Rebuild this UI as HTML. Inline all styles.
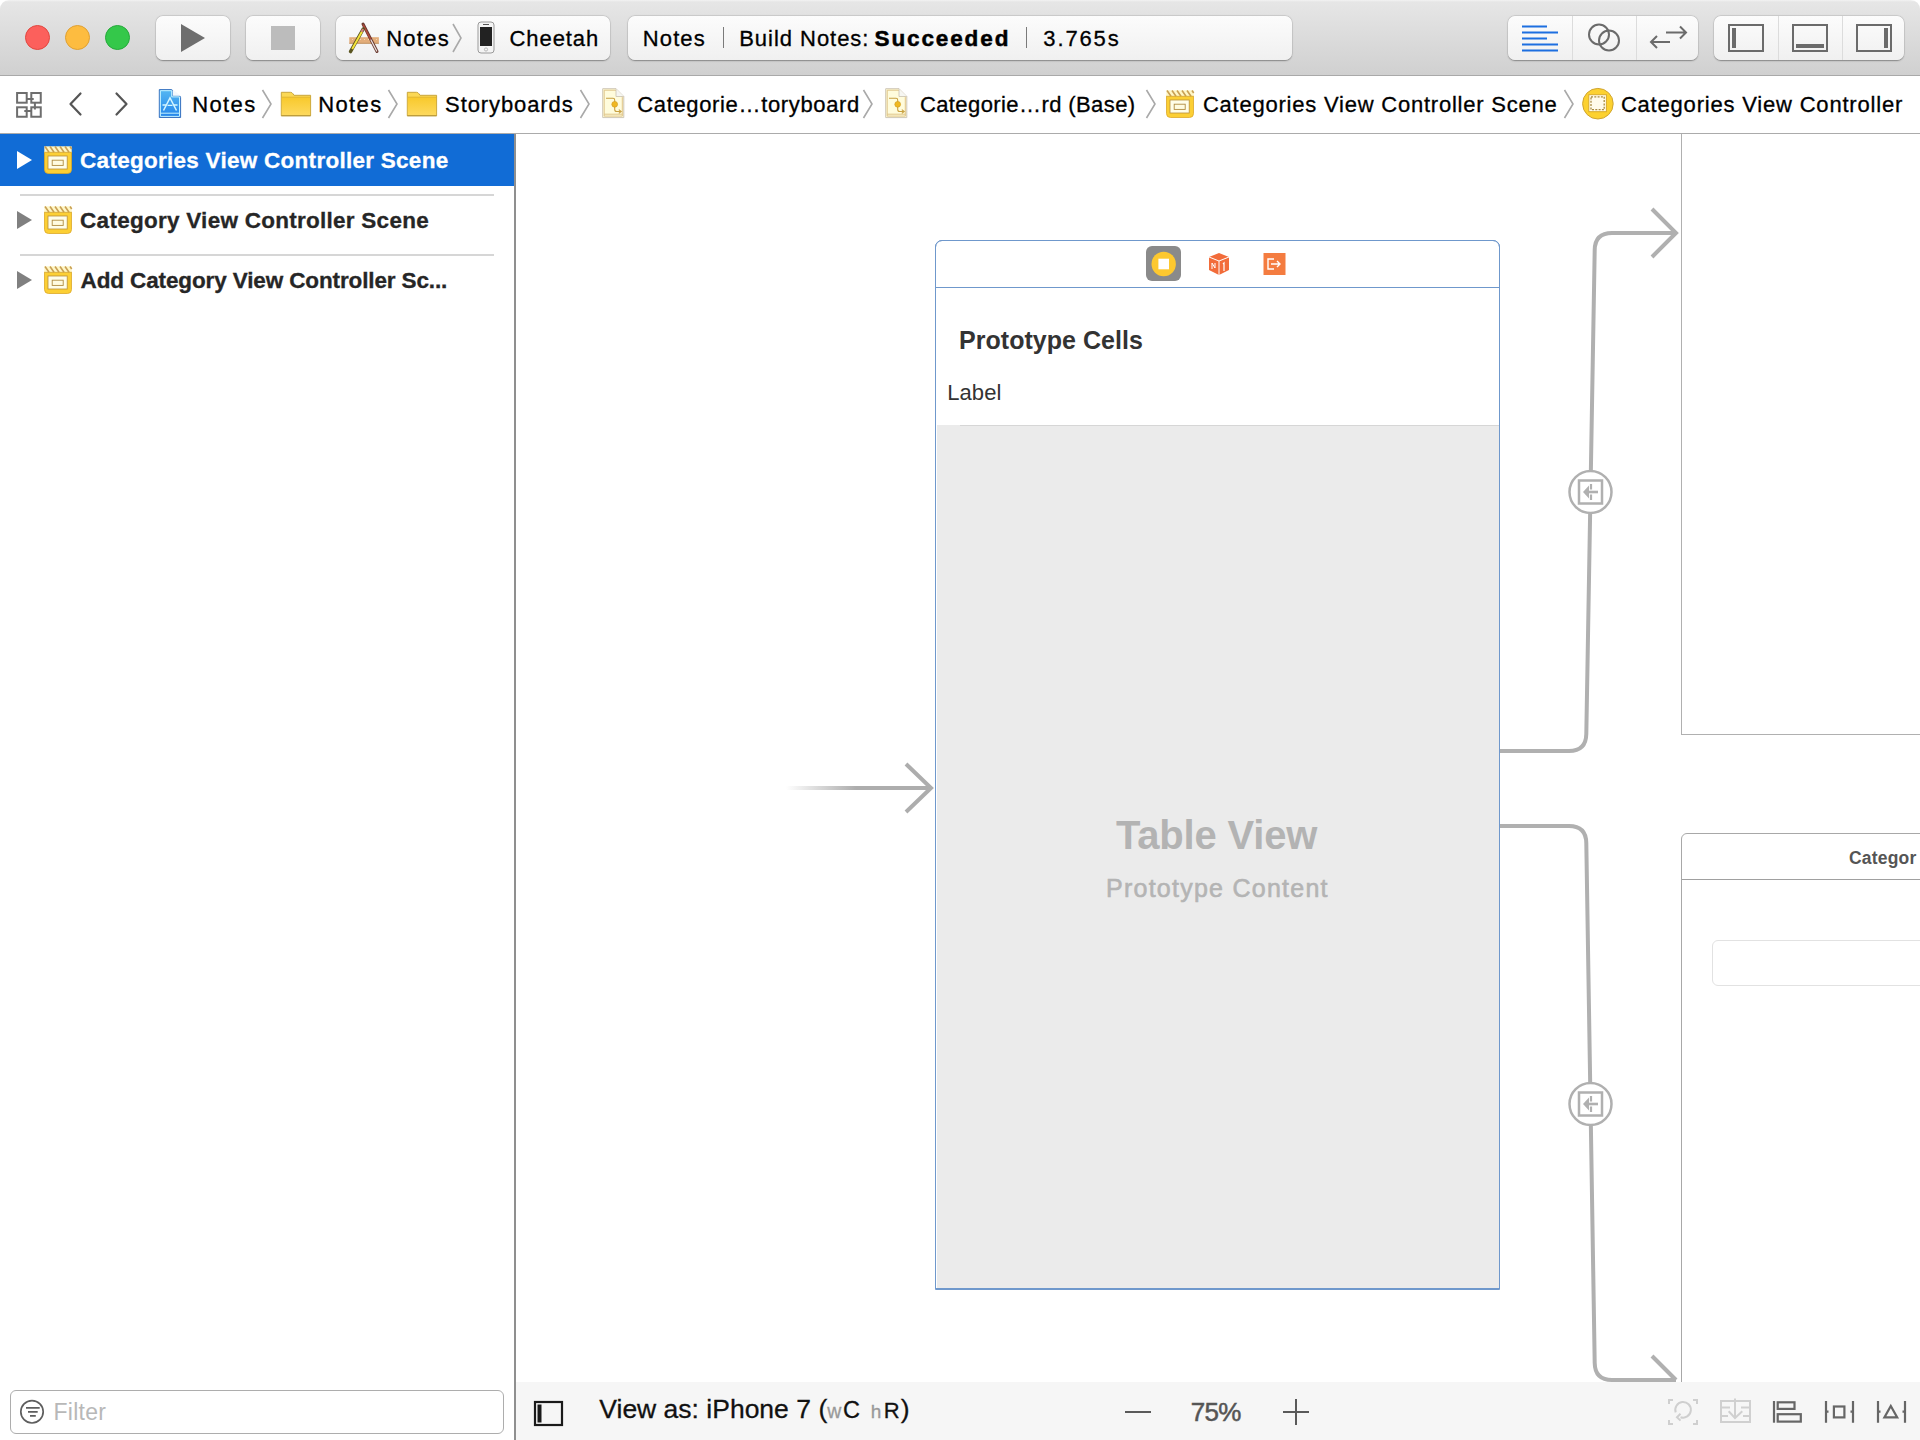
<!DOCTYPE html>
<html><head><meta charset="utf-8">
<style>
*{box-sizing:border-box;margin:0;padding:0}
html,body{width:1920px;height:1440px;overflow:hidden;background:#fff;font-family:"Liberation Sans",sans-serif;position:relative}
.a{position:absolute}
svg.a{overflow:visible}
.t{position:absolute;white-space:pre;line-height:1}
.btn{position:absolute;top:16px;height:44px;border-radius:7px;background:linear-gradient(#fcfcfc,#f0f0f0);box-shadow:0 0.5px 1.5px rgba(0,0,0,.35),0 0 0 0.5px rgba(0,0,0,.08)}
.tl{position:absolute;top:25px;width:25px;height:25px;border-radius:50%}
</style></head><body>
<div class="a" style="left:0;top:0;width:1920px;height:76px;background:linear-gradient(#f3f3f3 0,#e6e6e6 2px,#d0d0d0 75px);border-bottom:1px solid #a9a9a9;border-radius:9px 9px 0 0"></div>
<div class="tl" style="left:25px;background:#fc605c;border:1px solid #e1473f"></div>
<div class="tl" style="left:65px;background:#fdbc40;border:1px solid #dfa033"></div>
<div class="tl" style="left:105px;background:#34c84a;border:1px solid #25a93a"></div>
<div class="btn" style="left:156px;width:74px"></div>
<svg class="a" style="left:181px;top:24px" width="24" height="28"><path d="M0 0 L24 14 L0 28Z" fill="#6e6e6e"/></svg>
<div class="btn" style="left:246px;width:74px"></div>
<div class="a" style="left:271px;top:26px;width:24px;height:24px;background:#bcbcbc"></div>
<div class="btn" style="left:336px;width:274px"></div>
<svg class="a" style="left:344px;top:18px" width="40" height="40" viewBox="0 0 40 40">
<rect x="5.3" y="19.2" width="29.6" height="6.4" fill="#e3ad7a"/>
<path d="M5.3 25.3 H34.9" stroke="#b98a5a" stroke-width="0.8"/>
<path d="M8 21.5h1M12 21.5h1M16 21.5h1M20 21.5h1M24 21.5h1M28 21.5h1M32 21.5h1" stroke="#f5d6b0" stroke-width="1"/>
<path d="M19 6 L33 33.5" stroke="#6a3a30" stroke-width="3" stroke-linecap="round"/>
<path d="M19.3 7 L26.5 21" stroke="#b04a3c" stroke-width="1.6" stroke-linecap="round"/>
<path d="M27 22 L32.7 33" stroke="#ece4e0" stroke-width="1.2" stroke-linecap="round"/>
<path d="M19.2 11 L6.5 33.6" stroke="#5a5520" stroke-width="3.4" stroke-linecap="round"/>
<path d="M18 13.5 L8.2 31" stroke="#f6e43a" stroke-width="1.9"/>
<path d="M19.2 11 L17.6 13.8" stroke="#d08080" stroke-width="2"/>
</svg>
<div class="t" style="left:386.24px;top:28.00px;font-size:22px;color:#000;font-weight:400;letter-spacing:1.237px;-webkit-text-stroke:0.3px #000;">Notes</div>
<svg class="a" style="left:451px;top:23px" width="12" height="30"><path d="M2 1 L10 15 L2 29" fill="none" stroke="#a9a9a9" stroke-width="1.6"/></svg>
<svg class="a" style="left:477px;top:21px" width="18" height="33" viewBox="0 0 18 33">
<rect x="1" y="1" width="16" height="31" rx="3" fill="#f4f4f4" stroke="#9a9a9a" stroke-width="1"/>
<rect x="3" y="6" width="12" height="19" fill="#222"/>
<rect x="6" y="3" width="6" height="1" fill="#555"/>
<circle cx="9" cy="28.5" r="1.6" fill="none" stroke="#aaa" stroke-width="0.8"/>
</svg>
<div class="t" style="left:509.50px;top:28.00px;font-size:22px;color:#000;font-weight:400;letter-spacing:0.926px;-webkit-text-stroke:0.3px #000;">Cheetah</div>
<div class="btn" style="left:628px;width:664px"></div>
<div class="t" style="left:642.84px;top:28.00px;font-size:22px;color:#000;font-weight:400;letter-spacing:1.087px;-webkit-text-stroke:0.3px #000;">Notes</div>
<div class="a" style="left:722.5px;top:27px;width:1.5px;height:21px;background:#7a7a7a"></div>
<div class="t" style="left:739.24px;top:28.00px;font-size:22px;color:#000;font-weight:400;letter-spacing:0.962px;-webkit-text-stroke:0.3px #000;">Build Notes:</div>
<div class="t" style="left:874.55px;top:28.00px;font-size:22.5px;color:#000;font-weight:700;letter-spacing:1.877px;-webkit-text-stroke:0.5px #000;">Succeeded</div>
<div class="a" style="left:1025.5px;top:27px;width:1.5px;height:21px;background:#7a7a7a"></div>
<div class="t" style="left:1043.34px;top:28.00px;font-size:22px;color:#000;font-weight:400;letter-spacing:1.853px;-webkit-text-stroke:0.3px #000;">3.765s</div>
<div class="btn" style="left:1508px;width:190px"></div>
<div class="a" style="left:1572px;top:16px;width:1px;height:44px;background:#dcdcdc"></div>
<div class="a" style="left:1636px;top:16px;width:1px;height:44px;background:#dcdcdc"></div>
<svg class="a" style="left:1520px;top:24px" width="42" height="30">
<path d="M2 2.5h25M2 8.5h36M2 14.5h25M2 20.5h36M2 26.5h36" stroke="#1d6fe0" stroke-width="2"/>
</svg>
<svg class="a" style="left:1586px;top:22px" width="36" height="30">
<circle cx="13" cy="12.5" r="10" fill="none" stroke="#6b6b6b" stroke-width="2"/>
<circle cx="23" cy="18.5" r="10" fill="none" stroke="#6b6b6b" stroke-width="2"/>
</svg>
<svg class="a" style="left:1648px;top:22px" width="42" height="30">
<path d="M18 10.5h20M32 4.5l6 6l-6 6" fill="none" stroke="#6b6b6b" stroke-width="2"/>
<path d="M22 20h-19M9 14l-6 6l6 6" fill="none" stroke="#6b6b6b" stroke-width="2"/>
</svg>
<div class="btn" style="left:1714px;width:190px"></div>
<div class="a" style="left:1778px;top:16px;width:1px;height:44px;background:#dcdcdc"></div>
<div class="a" style="left:1842px;top:16px;width:1px;height:44px;background:#dcdcdc"></div>
<svg class="a" style="left:1726px;top:22px" width="40" height="32">
<rect x="3" y="3" width="34" height="26" fill="none" stroke="#6b6b6b" stroke-width="2"/>
<rect x="6" y="6" width="4" height="20" fill="#6b6b6b"/>
</svg>
<svg class="a" style="left:1790px;top:22px" width="40" height="32">
<rect x="3" y="3" width="34" height="26" fill="none" stroke="#6b6b6b" stroke-width="2"/>
<rect x="6" y="22" width="28" height="4" fill="#6b6b6b"/>
</svg>
<svg class="a" style="left:1854px;top:22px" width="40" height="32">
<rect x="3" y="3" width="34" height="26" fill="none" stroke="#6b6b6b" stroke-width="2"/>
<rect x="30" y="6" width="4" height="20" fill="#6b6b6b"/>
</svg>
<div class="a" style="left:0;top:76px;width:1920px;height:58px;background:#fff;border-bottom:1px solid #ababab"></div>
<svg class="a" style="left:12px;top:88px" width="34" height="34">
<g fill="none" stroke="#6e6e6e" stroke-width="2">
<rect x="5.1" y="5" width="9.6" height="9.7"/><rect x="19.3" y="5" width="9.45" height="9.7"/>
<rect x="5.1" y="19.3" width="9.6" height="9.45"/><rect x="19.3" y="19.3" width="9.45" height="9.45"/>
<path d="M14.7 10.9 H21.7 M22.9 14.7 V21.5 M12.3 23 H19.3"/>
</g></svg>
<svg class="a" style="left:66px;top:90px" width="18" height="28"><path d="M14.5 3.5 L4.5 14 L14.5 24.5" fill="none" stroke="#555" stroke-width="2.2" stroke-linecap="round" stroke-linejoin="round"/></svg>
<svg class="a" style="left:113px;top:90px" width="18" height="28"><path d="M3.5 3.5 L13.5 14 L3.5 24.5" fill="none" stroke="#555" stroke-width="2.2" stroke-linecap="round" stroke-linejoin="round"/></svg>
<svg class="a" style="left:150px;top:84px" width="40" height="40" viewBox="0 0 40 40">
<defs><linearGradient id="pg" x1="0" y1="0" x2="0" y2="1"><stop offset="0" stop-color="#55b8f2"/><stop offset="1" stop-color="#2384ea"/></linearGradient></defs>
<path d="M9.3 5.6 H21 Q22.8 5.6 22.8 7.5 V11.8 H28.8 Q30.6 11.8 30.6 13.6 V33.5 H9.3Z" fill="url(#pg)" stroke="#3c74c0" stroke-width="1"/>
<path d="M10.4 6.7 H21.7 V12.9 H29.5 V32.4 H10.4Z" fill="none" stroke="#c4f2ff" stroke-width="1"/>
<path d="M10.4 29.2 H29.5" stroke="#c4f2ff" stroke-width="1"/>
<path d="M22.8 5.6 L30.6 11.8 H22.8Z" fill="#f4f8fc"/>
<path d="M13.5 26.5 L20 14 L26.5 26.5" fill="none" stroke="#d4f6ff" stroke-width="1.5"/>
<path d="M12.5 21 H16 M17.5 21.3 H22.5 M24 21 H27.5" stroke="#d4f6ff" stroke-width="1.3"/>
</svg>
<div class="t" style="left:192.24px;top:94.00px;font-size:22px;color:#000;font-weight:400;letter-spacing:1.362px;-webkit-text-stroke:0.3px #000;">Notes</div>
<svg class="a" style="left:261px;top:89px" width="12" height="30"><path d="M1.5 1 L10 15 L1.5 29" fill="none" stroke="#a9a9a9" stroke-width="1.6"/></svg>
<svg class="a" style="left:280px;top:91px" width="32" height="26" viewBox="0 0 32 26">
<defs><linearGradient id="fg280" x1="0" y1="0" x2="0" y2="1"><stop offset="0" stop-color="#f8c92c"/><stop offset="1" stop-color="#fdd95e"/></linearGradient></defs>
<path d="M1.3 1.3 H10.5 Q12 1.3 13 2.8 L14 4.3 H30.6 V24.7 H1.3Z" fill="#fbd855" stroke="#c9a53c" stroke-width="1"/>
<path d="M1.8 6.3 H30.1 V24.2 H1.8Z" fill="url(#fg280)"/>
<path d="M1.8 6.2 H30.1" stroke="#e2b530" stroke-width="1"/>
<path d="M1.3 24.7 H30.6" stroke="#b99a3a" stroke-width="1.2"/>
</svg>
<div class="t" style="left:318.24px;top:94.00px;font-size:22px;color:#000;font-weight:400;letter-spacing:1.362px;-webkit-text-stroke:0.3px #000;">Notes</div>
<svg class="a" style="left:387px;top:89px" width="12" height="30"><path d="M1.5 1 L10 15 L1.5 29" fill="none" stroke="#a9a9a9" stroke-width="1.6"/></svg>
<svg class="a" style="left:406px;top:91px" width="32" height="26" viewBox="0 0 32 26">
<defs><linearGradient id="fg406" x1="0" y1="0" x2="0" y2="1"><stop offset="0" stop-color="#f8c92c"/><stop offset="1" stop-color="#fdd95e"/></linearGradient></defs>
<path d="M1.3 1.3 H10.5 Q12 1.3 13 2.8 L14 4.3 H30.6 V24.7 H1.3Z" fill="#fbd855" stroke="#c9a53c" stroke-width="1"/>
<path d="M1.8 6.3 H30.1 V24.2 H1.8Z" fill="url(#fg406)"/>
<path d="M1.8 6.2 H30.1" stroke="#e2b530" stroke-width="1"/>
<path d="M1.3 24.7 H30.6" stroke="#b99a3a" stroke-width="1.2"/>
</svg>
<div class="t" style="left:445.12px;top:94.00px;font-size:22px;color:#000;font-weight:400;letter-spacing:0.892px;-webkit-text-stroke:0.3px #000;">Storyboards</div>
<svg class="a" style="left:579px;top:89px" width="12" height="30"><path d="M1.5 1 L10 15 L1.5 29" fill="none" stroke="#a9a9a9" stroke-width="1.6"/></svg>
<svg class="a" style="left:601px;top:88px" width="26" height="32" viewBox="0 0 26 32">
<path d="M1.7 0.7 H15 L22.8 8.5 V29.6 H1.7Z" fill="#fffcdc" stroke="#cfc7b6" stroke-width="1"/>
<path d="M3.2 2.2 H14.3 L21.3 9.2 V28.1 H3.2Z" fill="none" stroke="#dcc080" stroke-width="0.9"/>
<path d="M15 0.7 V8.5 H22.8" fill="#f6f6f2" stroke="#cfc7b6" stroke-width="0.9"/>
<path d="M3.2 26.2 H21.3" stroke="#dcc080" stroke-width="0.9"/>
<path d="M5 10.3 H12 Q13.7 10.3 13.7 12 V21.5 Q13.7 23.5 15.7 23.5 H19.5" fill="none" stroke="#c8a040" stroke-width="1.1"/>
<circle cx="13.7" cy="16.3" r="2.9" fill="#f0b820" stroke="#d09a20" stroke-width="0.6"/>
<path d="M17.8 21.6 L20.2 23.5 L17.8 25.4" fill="none" stroke="#c8a040" stroke-width="1.1"/>
</svg>
<div class="t" style="left:637.30px;top:94.00px;font-size:22px;color:#000;font-weight:400;letter-spacing:0.645px;-webkit-text-stroke:0.3px #000;">Categorie…toryboard</div>
<svg class="a" style="left:862px;top:89px" width="12" height="30"><path d="M1.5 1 L10 15 L1.5 29" fill="none" stroke="#a9a9a9" stroke-width="1.6"/></svg>
<svg class="a" style="left:884px;top:88px" width="26" height="32" viewBox="0 0 26 32">
<path d="M1.7 0.7 H15 L22.8 8.5 V29.6 H1.7Z" fill="#fffcdc" stroke="#cfc7b6" stroke-width="1"/>
<path d="M3.2 2.2 H14.3 L21.3 9.2 V28.1 H3.2Z" fill="none" stroke="#dcc080" stroke-width="0.9"/>
<path d="M15 0.7 V8.5 H22.8" fill="#f6f6f2" stroke="#cfc7b6" stroke-width="0.9"/>
<path d="M3.2 26.2 H21.3" stroke="#dcc080" stroke-width="0.9"/>
<path d="M5 10.3 H12 Q13.7 10.3 13.7 12 V21.5 Q13.7 23.5 15.7 23.5 H19.5" fill="none" stroke="#c8a040" stroke-width="1.1"/>
<circle cx="13.7" cy="16.3" r="2.9" fill="#f0b820" stroke="#d09a20" stroke-width="0.6"/>
<path d="M17.8 21.6 L20.2 23.5 L17.8 25.4" fill="none" stroke="#c8a040" stroke-width="1.1"/>
</svg>
<div class="t" style="left:919.90px;top:94.00px;font-size:22px;color:#000;font-weight:400;letter-spacing:0.411px;-webkit-text-stroke:0.3px #000;">Categorie…rd (Base)</div>
<svg class="a" style="left:1145px;top:89px" width="12" height="30"><path d="M1.5 1 L10 15 L1.5 29" fill="none" stroke="#a9a9a9" stroke-width="1.6"/></svg>
<svg class="a" style="left:1166px;top:90px" width="28" height="28" viewBox="0 0 28 28">
<path d="M0.5 6 H27.5 V23.5 Q27.5 27.5 23.5 27.5 H4.5 Q0.5 27.5 0.5 23.5Z" fill="#fccf34" stroke="#dca828" stroke-width="0.8"/>
<rect x="0.3" y="0.3" width="27.4" height="6" fill="#fff7c6"/>
<path d="M1 0.5 L5 6.2M6 0.5 L10 6.2M11 0.5 L15 6.2M16 0.5 L20 6.2M21 0.5 L25 6.2M26 0.5 L27.7 3" stroke="#c9a055" stroke-width="1.6"/>
<path d="M0.3 6.3 H27.7" stroke="#d8a830" stroke-width="0.8"/>
<rect x="4" y="10" width="19.2" height="13" fill="#fffde8" stroke="#b8903a" stroke-width="0.8"/>
<rect x="8.2" y="14.2" width="11" height="5.2" fill="#fffbe0" stroke="#b08a40" stroke-width="0.9"/>
</svg>
<div class="t" style="left:1202.90px;top:94.00px;font-size:22px;color:#000;font-weight:400;letter-spacing:0.778px;-webkit-text-stroke:0.3px #000;">Categories View Controller Scene</div>
<svg class="a" style="left:1563px;top:89px" width="12" height="30"><path d="M1.5 1 L10 15 L1.5 29" fill="none" stroke="#a9a9a9" stroke-width="1.6"/></svg>
<svg class="a" style="left:1581px;top:87px" width="34" height="34" viewBox="0 0 34 34">
<circle cx="16.9" cy="16.7" r="15.3" fill="#fcd130" stroke="#d0a531" stroke-width="1"/>
<rect x="7.8" y="7.7" width="17.6" height="17" fill="#fffbea" stroke="#d9ab2a" stroke-width="1"/>
<rect x="10" y="9.8" width="13.2" height="12.9" fill="none" stroke="#a88a40" stroke-width="1.3" stroke-dasharray="2 1.3"/>
</svg>
<div class="t" style="left:1620.90px;top:94.00px;font-size:22px;color:#000;font-weight:400;letter-spacing:0.805px;-webkit-text-stroke:0.3px #000;">Categories View Controller</div>
<div class="a" style="left:0;top:134px;width:514px;height:52px;background:#116cd6"></div>
<svg class="a" style="left:16px;top:150px" width="18" height="20"><path d="M1 1 L16 10 L1 19Z" fill="#fff"/></svg>
<svg class="a" style="left:44px;top:146px" width="28" height="28" viewBox="0 0 28 28">
<path d="M0.5 6 H27.5 V23.5 Q27.5 27.5 23.5 27.5 H4.5 Q0.5 27.5 0.5 23.5Z" fill="#fccf34" stroke="#dca828" stroke-width="0.8"/>
<rect x="0.3" y="0.3" width="27.4" height="6" fill="#fff7c6"/>
<path d="M1 0.5 L5 6.2M6 0.5 L10 6.2M11 0.5 L15 6.2M16 0.5 L20 6.2M21 0.5 L25 6.2M26 0.5 L27.7 3" stroke="#c9a055" stroke-width="1.6"/>
<path d="M0.3 6.3 H27.7" stroke="#d8a830" stroke-width="0.8"/>
<rect x="4" y="10" width="19.2" height="13" fill="#fffde8" stroke="#b8903a" stroke-width="0.8"/>
<rect x="8.2" y="14.2" width="11" height="5.2" fill="#fffbe0" stroke="#b08a40" stroke-width="0.9"/>
</svg>
<div class="t" style="left:80.10px;top:150.00px;font-size:22.5px;color:#fff;font-weight:700;letter-spacing:0.270px;-webkit-text-stroke:0.3px #fff;">Categories View Controller Scene</div>
<div class="a" style="left:20px;top:194px;width:474px;height:2px;background:#d6d6d6"></div>
<svg class="a" style="left:16px;top:210px" width="18" height="20"><path d="M1 1 L16 10 L1 19Z" fill="#808080"/></svg>
<svg class="a" style="left:44px;top:206px" width="28" height="28" viewBox="0 0 28 28">
<path d="M0.5 6 H27.5 V23.5 Q27.5 27.5 23.5 27.5 H4.5 Q0.5 27.5 0.5 23.5Z" fill="#fccf34" stroke="#dca828" stroke-width="0.8"/>
<rect x="0.3" y="0.3" width="27.4" height="6" fill="#fff7c6"/>
<path d="M1 0.5 L5 6.2M6 0.5 L10 6.2M11 0.5 L15 6.2M16 0.5 L20 6.2M21 0.5 L25 6.2M26 0.5 L27.7 3" stroke="#c9a055" stroke-width="1.6"/>
<path d="M0.3 6.3 H27.7" stroke="#d8a830" stroke-width="0.8"/>
<rect x="4" y="10" width="19.2" height="13" fill="#fffde8" stroke="#b8903a" stroke-width="0.8"/>
<rect x="8.2" y="14.2" width="11" height="5.2" fill="#fffbe0" stroke="#b08a40" stroke-width="0.9"/>
</svg>
<div class="t" style="left:80.10px;top:210.00px;font-size:22.5px;color:#262626;font-weight:700;letter-spacing:0.264px;-webkit-text-stroke:0.3px #262626;">Category View Controller Scene</div>
<div class="a" style="left:20px;top:254px;width:474px;height:2px;background:#d6d6d6"></div>
<svg class="a" style="left:16px;top:270px" width="18" height="20"><path d="M1 1 L16 10 L1 19Z" fill="#808080"/></svg>
<svg class="a" style="left:44px;top:266px" width="28" height="28" viewBox="0 0 28 28">
<path d="M0.5 6 H27.5 V23.5 Q27.5 27.5 23.5 27.5 H4.5 Q0.5 27.5 0.5 23.5Z" fill="#fccf34" stroke="#dca828" stroke-width="0.8"/>
<rect x="0.3" y="0.3" width="27.4" height="6" fill="#fff7c6"/>
<path d="M1 0.5 L5 6.2M6 0.5 L10 6.2M11 0.5 L15 6.2M16 0.5 L20 6.2M21 0.5 L25 6.2M26 0.5 L27.7 3" stroke="#c9a055" stroke-width="1.6"/>
<path d="M0.3 6.3 H27.7" stroke="#d8a830" stroke-width="0.8"/>
<rect x="4" y="10" width="19.2" height="13" fill="#fffde8" stroke="#b8903a" stroke-width="0.8"/>
<rect x="8.2" y="14.2" width="11" height="5.2" fill="#fffbe0" stroke="#b08a40" stroke-width="0.9"/>
</svg>
<div class="t" style="left:80.55px;top:270.00px;font-size:22.5px;color:#262626;font-weight:700;letter-spacing:-0.125px;-webkit-text-stroke:0.3px #262626;">Add Category View Controller Sc...</div>
<div class="a" style="left:514px;top:134px;width:2px;height:1306px;background:#8f8f8f"></div>
<div class="a" style="left:10px;top:1390px;width:494px;height:44px;border:1.8px solid #adadad;border-radius:6px;background:#fff"></div>
<svg class="a" style="left:19px;top:1398px" width="28" height="28">
<circle cx="13" cy="13.8" r="11.2" fill="none" stroke="#5e5e5e" stroke-width="1.7"/>
<path d="M7 9.9h13.7M9 13.8h9.7M11 17.9h5.8" stroke="#5e5e5e" stroke-width="1.8"/>
</svg>
<div class="t" style="left:53.56px;top:1401.00px;font-size:23px;color:#b8b8b8;font-weight:400;letter-spacing:0.266px;-webkit-text-stroke:0px;">Filter</div>
<div class="a" style="left:516px;top:134px;width:1404px;height:1248px;background:#fff;overflow:hidden">
<div class="a" style="left:-516px;top:-134px;width:1920px;height:1440px">
<div class="a" style="left:935px;top:240px;width:565px;height:1049px;border:1.5px solid #6f98cc;border-radius:7px 7px 0 0;background:#fff;overflow:hidden">
</div>
<div class="a" style="left:936px;top:286.5px;width:563px;height:1.5px;background:#6f98cc"></div>
<div class="a" style="left:1146px;top:246px;width:35px;height:35px;border-radius:6px;background:#8a8a8a"></div>
<svg class="a" style="left:1146px;top:246px" width="35" height="35">
<circle cx="17.7" cy="18" r="12.2" fill="#fdc82f"/>
<rect x="12.4" y="12.7" width="10.6" height="10.6" fill="#fff"/>
</svg>
<svg class="a" style="left:1207px;top:252px" width="24" height="24" viewBox="0 0 24 24">
<path d="M12 1 L22 5 V18 L12 23 L2 18 V5Z" fill="#f26c3a"/>
<path d="M2 5 L12 9 L22 5 M12 9 V23" fill="none" stroke="#fff" stroke-width="1"/>
<path d="M5 11 V17 M5 11 L8 16 V11" fill="none" stroke="#fff" stroke-width="1"/>
<path d="M16 12 L17 11 V19" fill="none" stroke="#fff" stroke-width="1.2"/>
</svg>
<svg class="a" style="left:1263px;top:253px" width="23" height="22" viewBox="0 0 23 22">
<rect x="0.5" y="0" width="22" height="22" fill="#f47c40"/>
<path d="M11 6 H5 V16 H11" fill="none" stroke="#fff" stroke-width="1.4"/>
<path d="M8 11 H16 M14 8 L17 11 L14 14" fill="none" stroke="#fff" stroke-width="1.4"/>
</svg>
<div class="t" style="left:959.00px;top:328.00px;font-size:25px;color:#333;font-weight:700;letter-spacing:0.038px;">Prototype Cells</div>
<div class="t" style="left:947.24px;top:382.00px;font-size:22px;color:#333;font-weight:400;letter-spacing:0.075px;-webkit-text-stroke:0px;">Label</div>
<div class="a" style="left:936.5px;top:425px;width:562px;height:863px;background:#ebebeb"></div>
<div class="a" style="left:960px;top:424.5px;width:539px;height:1.5px;background:#d6d6d6"></div>
<div class="t" style="left:1116.00px;top:815.00px;font-size:40px;color:#b3b3b3;font-weight:700;letter-spacing:-0.193px;">Table View</div>
<div class="t" style="left:1106.00px;top:876.00px;font-size:25px;color:#b4b4b4;font-weight:400;letter-spacing:1.252px;-webkit-text-stroke:0.6px #b4b4b4">Prototype Content</div>
<div class="a" style="left:935px;top:240px;width:565px;height:1050px;border:1.5px solid #6f98cc;border-radius:7px 7px 0 0"></div>
<svg class="a" style="left:0;top:0" width="1920" height="1440">
<defs><linearGradient id="eg" x1="786" y1="0" x2="856" y2="0" gradientUnits="userSpaceOnUse">
<stop offset="0" stop-color="#adadad" stop-opacity="0"/><stop offset="1" stop-color="#adadad"/></linearGradient></defs>
<path d="M786 788 H930" stroke="url(#eg)" stroke-width="4"/>
<path d="M906 764 L931 788 L906 812" fill="none" stroke="#adadad" stroke-width="4"/>
<g fill="none" stroke="#b0b0b0" stroke-width="4">
<path d="M1500 751 H1569 Q1586 751 1586.3 734 L1594.7 250 Q1595 233 1612 233 H1676"/>
<path d="M1652 209 L1676 233 L1652 257"/>
<path d="M1500 826 H1569 Q1586 826 1586.3 843 L1594.7 1363 Q1595 1380 1612 1380 H1676"/>
<path d="M1652 1356 L1676 1380"/>
</g>
<g>
<circle cx="1590.5" cy="492" r="21" fill="#fff" stroke="#b0b0b0" stroke-width="2.5"/>
<rect x="1579" y="480.5" width="23" height="23" fill="none" stroke="#b0b0b0" stroke-width="2.5"/>
<path d="M1591 484 V489.5 M1591 494.5 V500" stroke="#b0b0b0" stroke-width="2.2"/>
<path d="M1598 492 H1586" stroke="#b0b0b0" stroke-width="2.6"/>
<path d="M1589 485.5 L1583 492 L1589 498.5Z" fill="#b0b0b0"/>
</g>
<g>
<circle cx="1590.5" cy="1104" r="21" fill="#fff" stroke="#b0b0b0" stroke-width="2.5"/>
<rect x="1579" y="1092.5" width="23" height="23" fill="none" stroke="#b0b0b0" stroke-width="2.5"/>
<path d="M1591 1096 V1101.5 M1591 1106.5 V1112" stroke="#b0b0b0" stroke-width="2.2"/>
<path d="M1598 1104 H1586" stroke="#b0b0b0" stroke-width="2.6"/>
<path d="M1589 1097.5 L1583 1104 L1589 1110.5Z" fill="#b0b0b0"/>
</g>
</svg>
<div class="a" style="left:1681px;top:100px;width:400px;height:635px;border:1px solid #b0b0b0;background:#fff"></div>
<div class="a" style="left:1681px;top:833px;width:400px;height:700px;border:1px solid #a8a8a8;border-radius:6px 6px 0 0;background:#fff"></div>
<div class="a" style="left:1682px;top:879px;width:400px;height:1px;background:#a0a0a0"></div>
<div class="t" style="left:1849.00px;top:850.00px;font-size:17.5px;color:#555;font-weight:700;letter-spacing:0.200px;">Categor</div>
<div class="a" style="left:1712px;top:940px;width:400px;height:46px;border:1px solid #e2e2e2;border-radius:6px;background:#fff"></div>
</div></div>
<div class="a" style="left:516px;top:1382px;width:1404px;height:58px;background:#f6f6f6"></div>
<svg class="a" style="left:533px;top:1400px" width="30" height="26">
<rect x="2" y="2" width="27" height="23" fill="none" stroke="#1a1a1a" stroke-width="2.2"/>
<rect x="4.5" y="4.5" width="4" height="18" fill="#1a1a1a"/>
</svg>
<div class="t" style="left:599.30px;top:1396.00px;font-size:26.5px;color:#111;font-weight:400;letter-spacing:0.000px;-webkit-text-stroke:0.3px #111;">View as: iPhone 7</div>
<div class="t" style="left:818.41px;top:1396.00px;font-size:26.5px;color:#111;font-weight:400;letter-spacing:0.000px;-webkit-text-stroke:0.3px #111;">(</div>
<div class="t" style="left:827.20px;top:1402.00px;font-size:19.5px;color:#999;font-weight:400;letter-spacing:0.000px;-webkit-text-stroke:0.3px #999;">w</div>
<div class="t" style="left:843.12px;top:1399.00px;font-size:23.5px;color:#111;font-weight:400;letter-spacing:0.000px;-webkit-text-stroke:0.3px #111;">C</div>
<div class="t" style="left:870.66px;top:1402.00px;font-size:19px;color:#999;font-weight:400;letter-spacing:0.000px;-webkit-text-stroke:0.3px #999;">h</div>
<div class="t" style="left:883.74px;top:1400.00px;font-size:22px;color:#111;font-weight:400;letter-spacing:0.000px;-webkit-text-stroke:0.3px #111;">R</div>
<div class="t" style="left:900.71px;top:1396.00px;font-size:26.5px;color:#111;font-weight:400;letter-spacing:0.000px;-webkit-text-stroke:0.3px #111;">)</div>
<div class="a" style="left:1125px;top:1410.5px;width:26px;height:2.2px;background:#5a5a5a"></div>
<div class="t" style="left:1190.70px;top:1399.00px;font-size:26px;color:#555;font-weight:400;letter-spacing:-0.690px;-webkit-text-stroke:0.5px #555">75%</div>
<div class="a" style="left:1283px;top:1410.5px;width:26px;height:2.2px;background:#5a5a5a"></div>
<div class="a" style="left:1294.8px;top:1399px;width:2.2px;height:26px;background:#5a5a5a"></div>
<svg class="a" style="left:1666px;top:1397px" width="34" height="30">
<g fill="none" stroke="#cfcfcf" stroke-width="2">
<path d="M3 7 V3 H7 M27 3 H31 V7 M31 23 V27 H27 M7 27 H3 V23"/>
<path d="M9.7 15.4 A7.8 7.8 0 1 1 14.5 20.2"/>
<path d="M14.5 16.8 L11 20.2 L14.5 23.6"/>
</g></svg>
<svg class="a" style="left:1719px;top:1397px" width="34" height="30">
<g fill="none" stroke="#d0d0d0" stroke-width="2">
<rect x="2" y="4" width="29" height="21"/>
<path d="M2 10.6 H11 M22 10.6 H31 M2 19 H9 M24 19 H31"/>
<path d="M16 1.5 V21 M9.7 14.3 L16 21 L23.3 14.3"/>
</g></svg>
<svg class="a" style="left:1770px;top:1399px" width="36" height="28">
<g fill="none" stroke="#666" stroke-width="2.2">
<path d="M4 2 V23.7"/>
<rect x="7.7" y="3.3" width="16.8" height="6.6"/>
<rect x="7.7" y="15.2" width="23.1" height="7.4"/>
</g></svg>
<svg class="a" style="left:1822px;top:1399px" width="36" height="28">
<g fill="none" stroke="#666" stroke-width="2.2">
<path d="M4 2 V23.7 M31 2 V23.7 M4 12.7 H6.5 M28.5 12.7 H31"/>
<rect x="11.9" y="7.5" width="10.5" height="10.9"/>
</g></svg>
<svg class="a" style="left:1874px;top:1399px" width="36" height="28">
<g fill="none" stroke="#666" stroke-width="2.2">
<path d="M4 2 V23.7 M31 2 V23.7 M4 12.7 H6.5 M28.5 12.7 H31"/>
<path d="M16.8 7 L23.2 18.4 H10.4Z"/>
</g></svg>
</body></html>
